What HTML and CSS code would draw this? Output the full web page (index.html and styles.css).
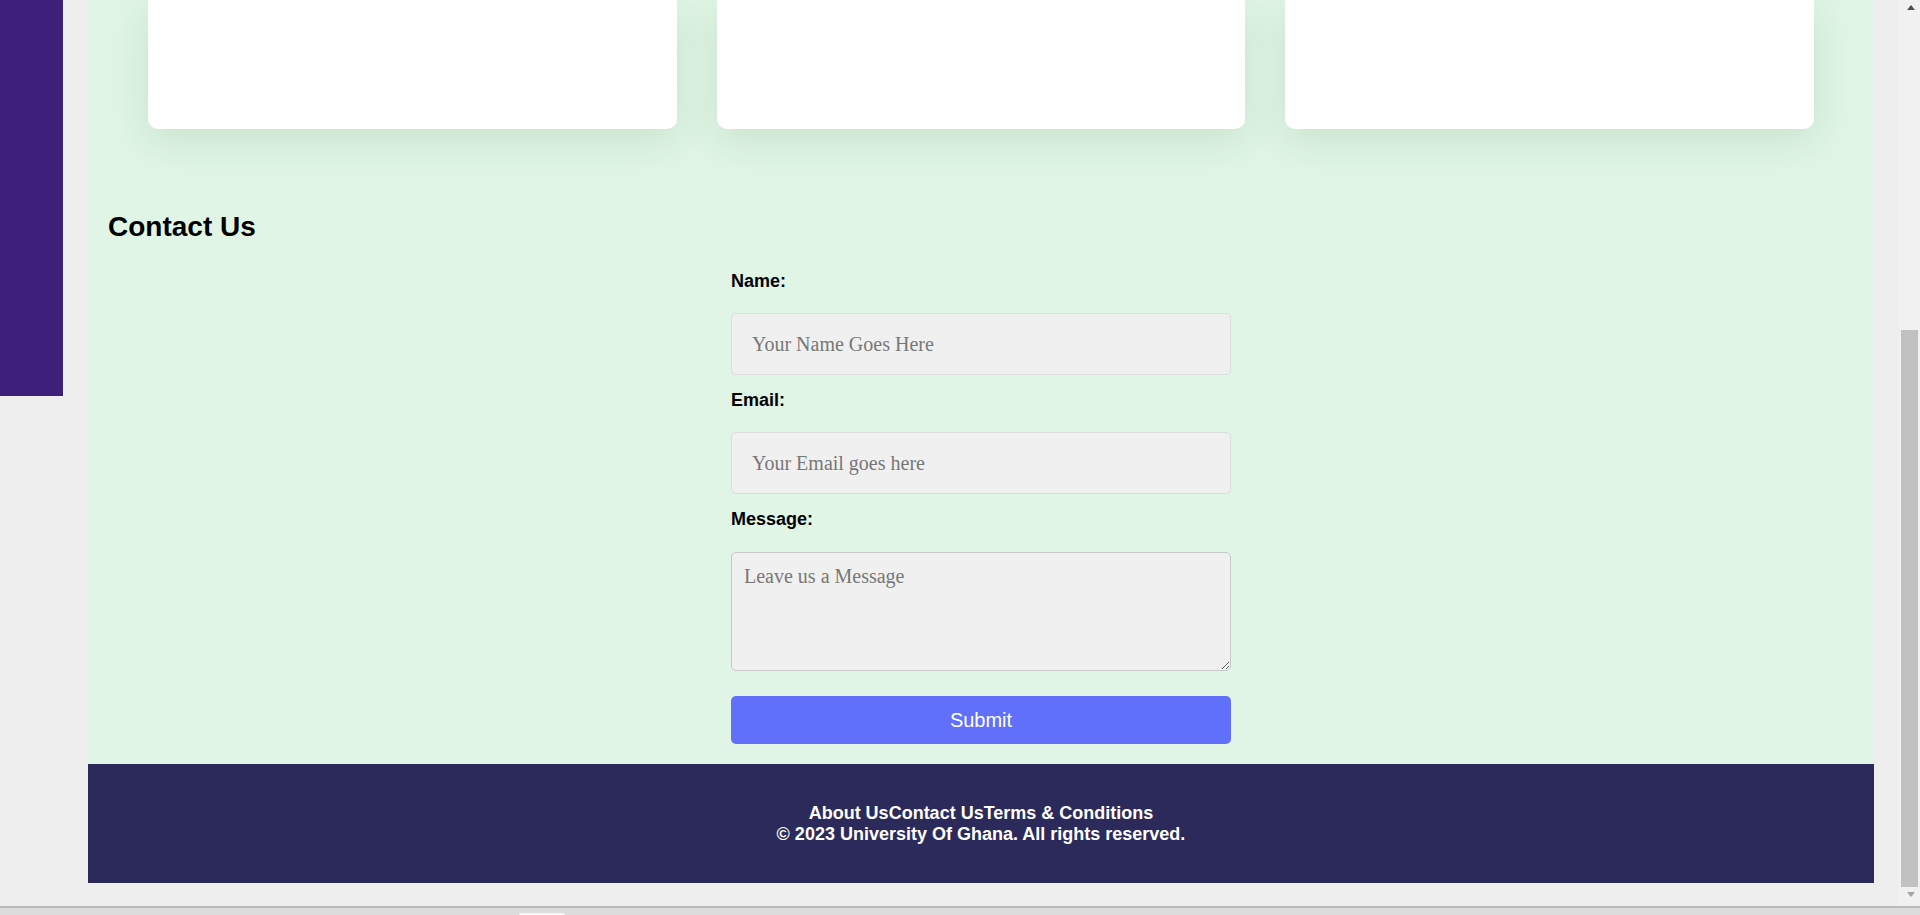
FILE: index.html
```html
<!DOCTYPE html>
<html lang="en">
<head>
<meta charset="utf-8">
<title>University Of Ghana</title>
<link rel="stylesheet" href="styles.css">
</head>
<body>
<div class="window">
  <div class="page">
    <aside class="sidebar-col"><div class="sidebar"></div></aside>
    <div class="main">
      <section class="content">
        <div class="cards">
          <div class="card"></div>
          <div class="card"></div>
          <div class="card"></div>
        </div>
        <h2 class="contact-title">Contact Us</h2>
        <form class="contact-form">
          <label class="field-label" for="name">Name:</label>
          <input class="field-input" id="name" type="text" placeholder="Your Name Goes Here">
          <label class="field-label" for="email">Email:</label>
          <input class="field-input" id="email" type="email" placeholder="Your Email goes here">
          <label class="field-label label-message" for="message">Message:</label>
          <textarea class="field-textarea" id="message" placeholder="Leave us a Message"></textarea>
          <button class="submit-btn" type="button">Submit</button>
        </form>
      </section>
      <footer class="footer">
        <div class="footer-links"><span>About Us</span><span>Contact Us</span><span>Terms &amp; Conditions</span></div>
        <div class="footer-copy">&copy; 2023 University Of Ghana. All rights reserved.</div>
      </footer>
    </div>
  </div>
  <div class="scrollbar">
    <div class="sb-btn"><span class="arrow-up"></span></div>
    <div class="sb-track"><div class="sb-thumb"></div></div>
    <div class="sb-btn sb-btn-down"><span class="arrow-down"></span></div>
  </div>
</div>
<div class="bottom-strip"><div class="strip-tab"></div></div>
</body>
</html>
```
FILE: styles.css
```css
* { box-sizing: border-box; }

html, body {
  margin: 0;
  padding: 0;
}

body {
  width: 1920px;
  height: 915px;
  overflow: hidden;
  background: #eeeeee;
  font-family: "Liberation Sans", Arial, sans-serif;
  display: flex;
  flex-direction: column;
}

.window {
  height: 906px;
  display: flex;
}

.page {
  flex: 1;
  display: flex;
  padding-right: 25px;
}

.sidebar-col {
  width: 63px;
  margin-right: 25px;
}

.sidebar {
  height: 396px;
  background: #3e1f79;
}

.main {
  flex: 1;
  display: flex;
  flex-direction: column;
}

.content {
  background: #e0f5e5;
  padding-bottom: 20px;
}

.cards {
  display: grid;
  grid-template-columns: repeat(3, 1fr);
  gap: 40px;
  padding: 0 60px;
}

.card {
  height: 129px;
  background: #ffffff;
  border-radius: 0 0 10px 10px;
  box-shadow: 0 10px 40px rgba(40, 80, 50, 0.12);
}

.contact-title {
  margin: 82px 0 0;
  padding-left: 20px;
  font-size: 28px;
  line-height: 32px;
  font-weight: bold;
  color: #000;
}

.contact-form {
  width: 500px;
  margin: 28px auto 0;
  display: flex;
  flex-direction: column;
}

.field-label {
  font-size: 18px;
  line-height: 21px;
  font-weight: bold;
  color: #000;
  margin-bottom: 21px;
}

.label-message {
  margin-bottom: 22px;
}

.field-input {
  width: 500px;
  height: 62px;
  padding: 0 20px;
  border: 1px solid #dcdcdc;
  border-radius: 5px;
  background: #f0f0f0;
  font-family: "Liberation Serif", "Times New Roman", serif;
  font-size: 20px;
  color: #222;
  margin: 0 0 15px;
  outline: none;
}

.field-textarea {
  display: block;
  width: 500px;
  height: 119px;
  padding: 12px;
  border: 1px solid #c9c9c9;
  border-radius: 5px;
  background: #f0f0f0;
  font-family: "Liberation Serif", "Times New Roman", serif;
  font-size: 20px;
  color: #222;
  margin: 0 0 25px;
  resize: vertical;
  outline: none;
}

.field-input::placeholder,
.field-textarea::placeholder {
  color: #777777;
}

.submit-btn {
  width: 500px;
  height: 48px;
  border: none;
  border-radius: 5px;
  background: #6070fa;
  color: #ffffff;
  font-family: "Liberation Sans", Arial, sans-serif;
  font-size: 20px;
  padding: 0;
}

.footer {
  height: 119px;
  background: #2c2a5a;
  color: #ffffff;
  text-align: center;
  font-size: 18px;
  line-height: 21px;
  font-weight: bold;
  padding-top: 39px;
}

.scrollbar {
  width: 21px;
  background: #f1f1f1;
  display: flex;
  flex-direction: column;
}

.sb-btn {
  height: 17px;
  display: flex;
  justify-content: center;
  padding-top: 5px;
  padding-left: 2px;
}

.sb-btn-down {
  padding-top: 3px;
}

.arrow-up {
  width: 0;
  height: 0;
  border-left: 4.5px solid transparent;
  border-right: 4.5px solid transparent;
  border-bottom: 5px solid #505050;
}

.arrow-down {
  width: 0;
  height: 0;
  border-left: 4.5px solid transparent;
  border-right: 4.5px solid transparent;
  border-top: 5px solid #a3a3a3;
}

.sb-track {
  flex: 1;
  padding: 313px 2px 0 2px;
}

.sb-thumb {
  height: 557px;
  background: #c1c1c1;
}

.bottom-strip {
  height: 9px;
  border-top: 2px solid #bababa;
  background: #dcdcdc;
  padding: 5px 0 0 519px;
}

.strip-tab {
  width: 46px;
  height: 2px;
  background: #f8f8f8;
  border-radius: 3px 3px 0 0;
}
```
